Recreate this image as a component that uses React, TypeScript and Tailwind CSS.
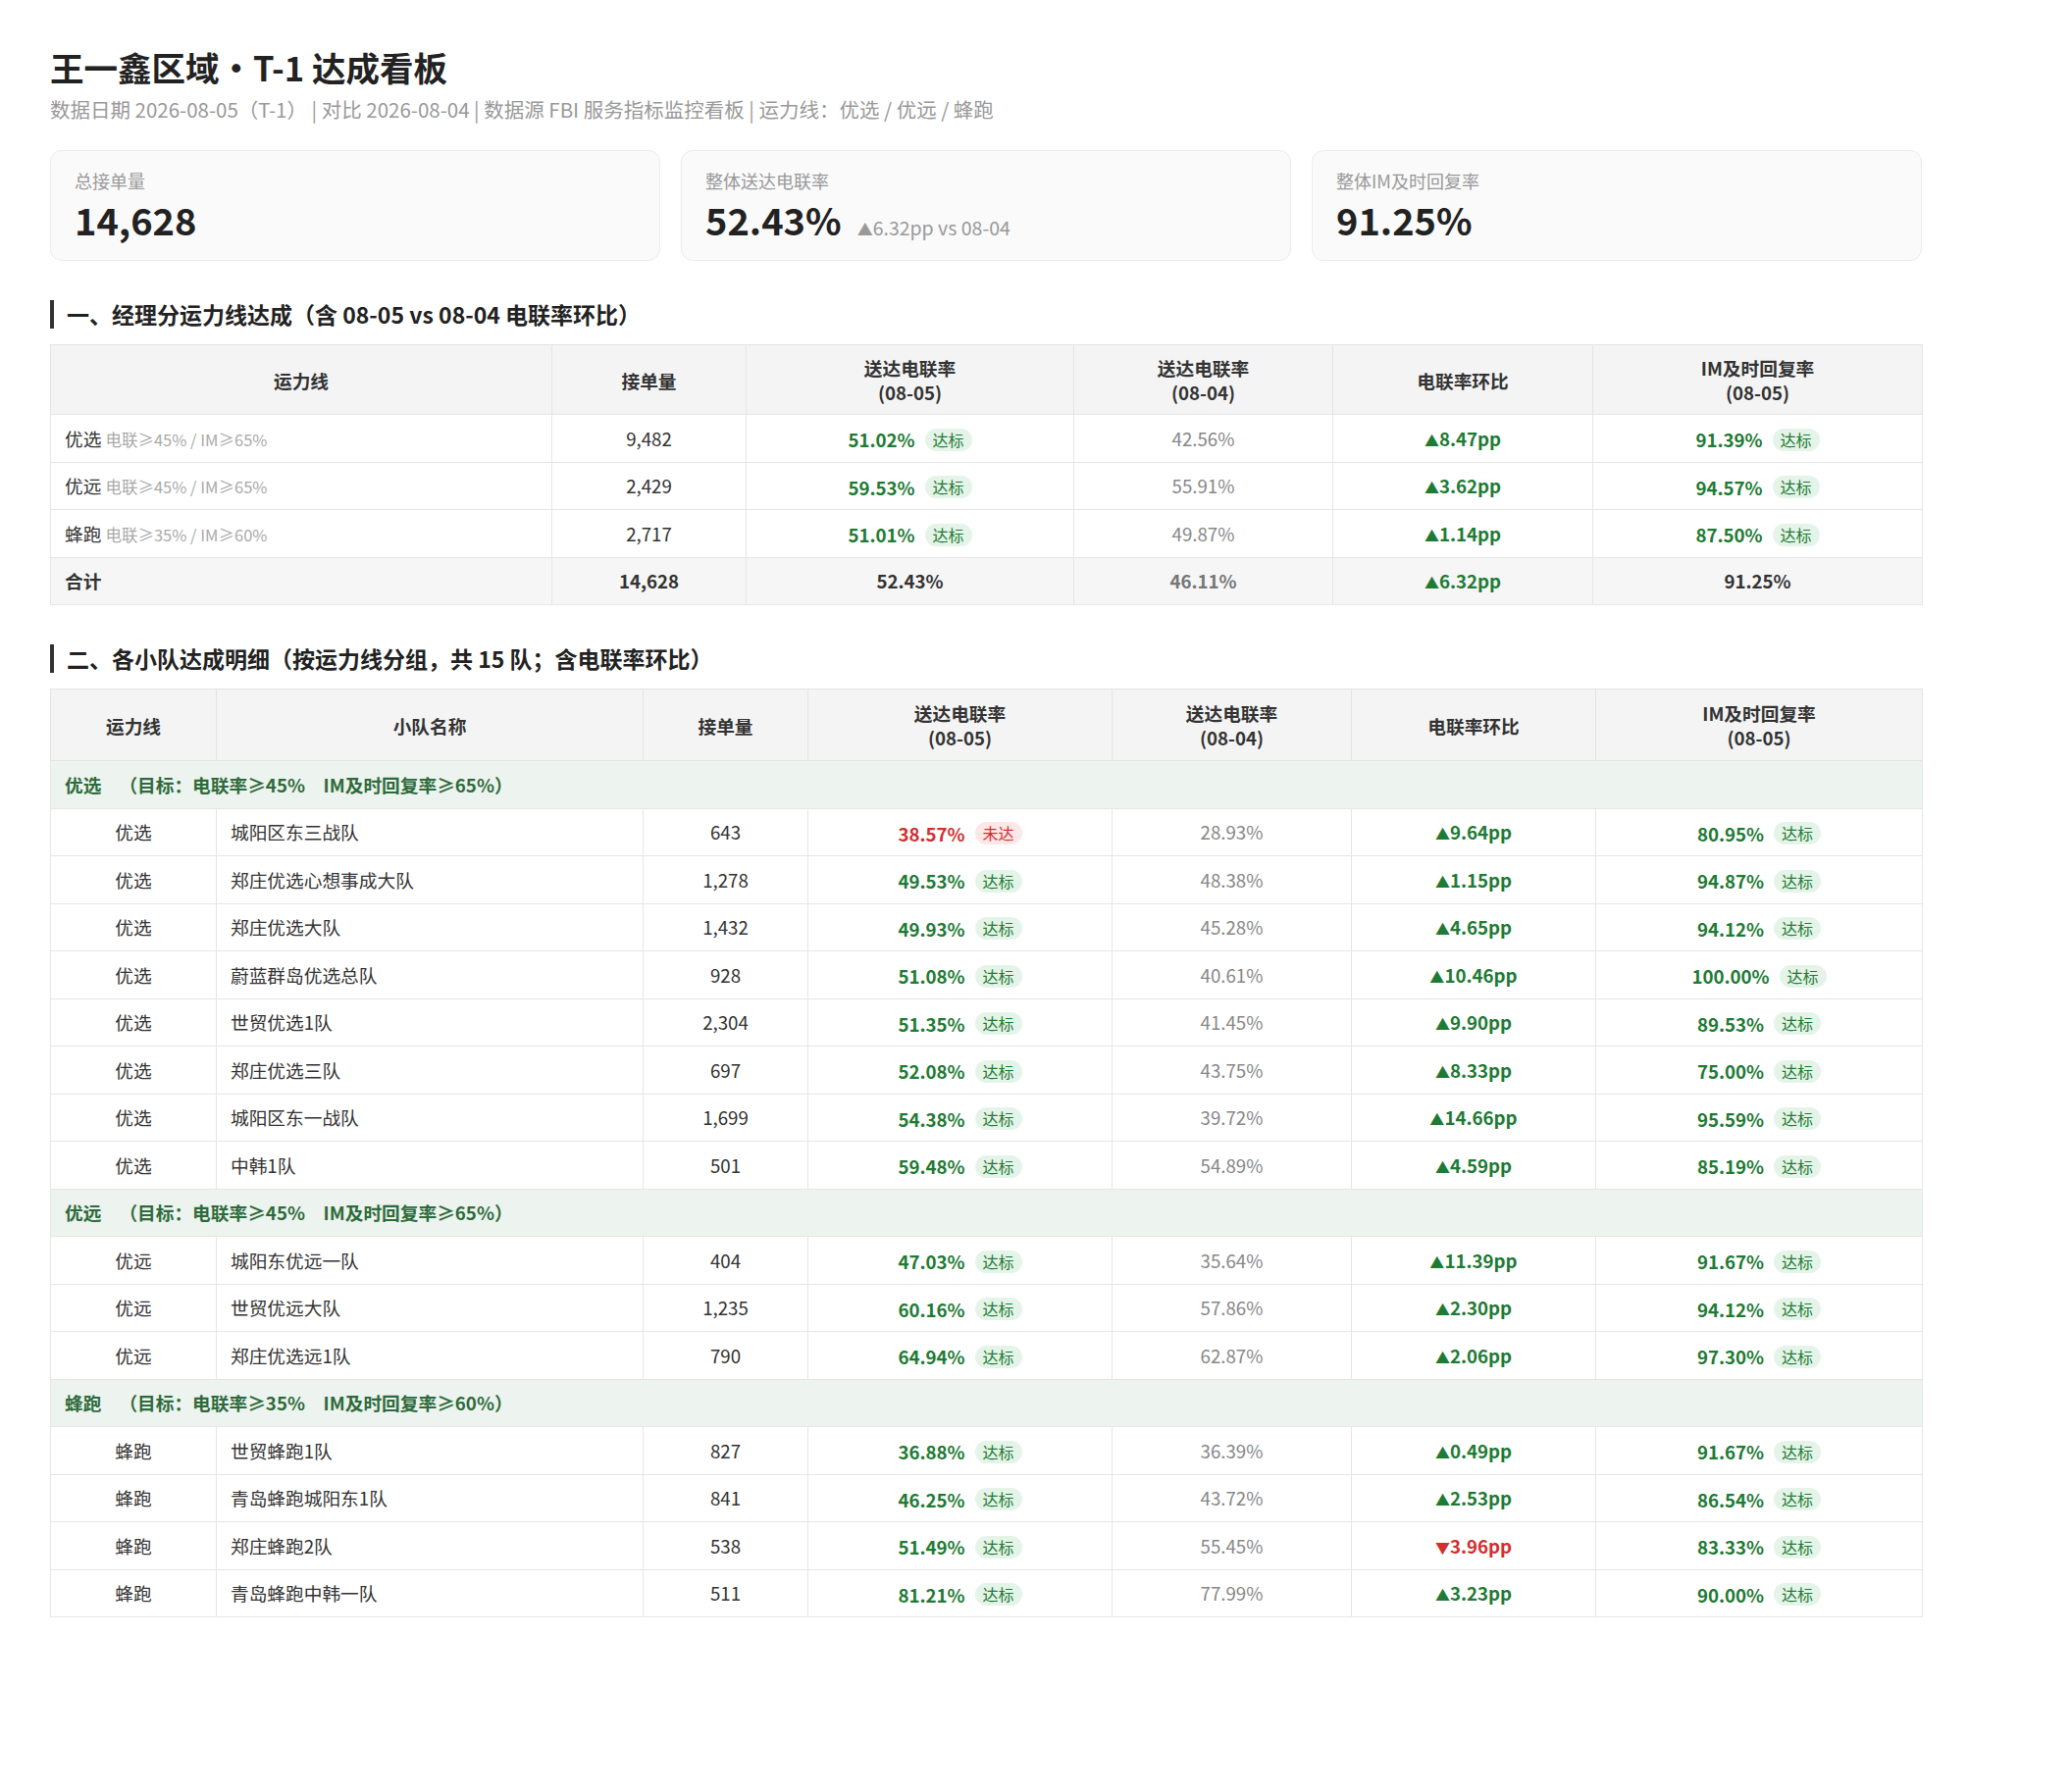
import React from "react";

interface LineRow {
  line: string;
  target: string;
  orders: string;
  rate: string;
  ratePrev: string;
  delta: string;
  im: string;
}

interface TeamRow {
  line: string;
  name: string;
  orders: string;
  rate: string;
  ok: boolean;
  ratePrev: string;
  delta: string;
  up: boolean;
  im: string;
}

interface Group {
  line: string;
  goal: string;
  teams: TeamRow[];
}

const lineRows: LineRow[] = [
  { line: "优选", target: "电联≥45% / IM≥65%", orders: "9,482", rate: "51.02%", ratePrev: "42.56%", delta: "8.47pp", im: "91.39%" },
  { line: "优远", target: "电联≥45% / IM≥65%", orders: "2,429", rate: "59.53%", ratePrev: "55.91%", delta: "3.62pp", im: "94.57%" },
  { line: "蜂跑", target: "电联≥35% / IM≥60%", orders: "2,717", rate: "51.01%", ratePrev: "49.87%", delta: "1.14pp", im: "87.50%" },
];

const t = (
  line: string,
  name: string,
  orders: string,
  rate: string,
  ratePrev: string,
  delta: string,
  im: string,
  ok = true,
  up = true
): TeamRow => ({ line, name, orders, rate, ok, ratePrev, delta, up, im });

const groups: Group[] = [
  {
    line: "优选",
    goal: "（目标：电联率≥45%　IM及时回复率≥65%）",
    teams: [
      t("优选", "城阳区东三战队", "643", "38.57%", "28.93%", "9.64pp", "80.95%", false),
      t("优选", "郑庄优选心想事成大队", "1,278", "49.53%", "48.38%", "1.15pp", "94.87%"),
      t("优选", "郑庄优选大队", "1,432", "49.93%", "45.28%", "4.65pp", "94.12%"),
      t("优选", "蔚蓝群岛优选总队", "928", "51.08%", "40.61%", "10.46pp", "100.00%"),
      t("优选", "世贸优选1队", "2,304", "51.35%", "41.45%", "9.90pp", "89.53%"),
      t("优选", "郑庄优选三队", "697", "52.08%", "43.75%", "8.33pp", "75.00%"),
      t("优选", "城阳区东一战队", "1,699", "54.38%", "39.72%", "14.66pp", "95.59%"),
      t("优选", "中韩1队", "501", "59.48%", "54.89%", "4.59pp", "85.19%"),
    ],
  },
  {
    line: "优远",
    goal: "（目标：电联率≥45%　IM及时回复率≥65%）",
    teams: [
      t("优远", "城阳东优远一队", "404", "47.03%", "35.64%", "11.39pp", "91.67%"),
      t("优远", "世贸优远大队", "1,235", "60.16%", "57.86%", "2.30pp", "94.12%"),
      t("优远", "郑庄优选远1队", "790", "64.94%", "62.87%", "2.06pp", "97.30%"),
    ],
  },
  {
    line: "蜂跑",
    goal: "（目标：电联率≥35%　IM及时回复率≥60%）",
    teams: [
      t("蜂跑", "世贸蜂跑1队", "827", "36.88%", "36.39%", "0.49pp", "91.67%"),
      t("蜂跑", "青岛蜂跑城阳东1队", "841", "46.25%", "43.72%", "2.53pp", "86.54%"),
      t("蜂跑", "郑庄蜂跑2队", "538", "51.49%", "55.45%", "3.96pp", "83.33%", true, false),
      t("蜂跑", "青岛蜂跑中韩一队", "511", "81.21%", "77.99%", "3.23pp", "90.00%"),
    ],
  },
];

function Badge({ ok = true }: { ok?: boolean }) {
  return ok ? (
    <span className="ml-[10px] inline-block rounded-full bg-[#e5f4e9] px-2 align-middle text-[16px] font-normal leading-[23px] text-[#1e7b34]">
      达标
    </span>
  ) : (
    <span className="ml-[10px] inline-block rounded-full bg-[#fde7e7] px-2 align-middle text-[16px] font-normal leading-[23px] text-[#d32f2f]">
      未达
    </span>
  );
}

function Rate({ value, ok = true }: { value: string; ok?: boolean }) {
  return (
    <span className="whitespace-nowrap">
      <span className={`align-middle font-bold ${ok ? "text-[#1e7b34]" : "text-[#d32f2f]"}`}>{value}</span>
      <Badge ok={ok} />
    </span>
  );
}

function Delta({ value, up = true }: { value: string; up?: boolean }) {
  return (
    <span className={`font-bold ${up ? "text-[#1e7b34]" : "text-[#d32f2f]"}`}>
      <span className="text-[15px]">{up ? "▲" : "▼"}</span>
      {value}
    </span>
  );
}

function SectionTitle({ children }: { children: React.ReactNode }) {
  return (
    <h2 className="mb-4 border-l-4 border-[#333] pl-[13px] text-[23px] font-bold leading-[29px] text-[#222]">
      {children}
    </h2>
  );
}

function HeadCell({ children, className = "" }: { children: React.ReactNode; className?: string }) {
  return (
    <th className={`border border-[#e4e4e4] px-3 text-center align-middle font-bold leading-[25px] text-[#333] ${className}`}>
      {children}
    </th>
  );
}

const td = "border border-[#e6e6e6] px-[14px] py-0 align-middle";

export default function App() {
  return (
    <div className="min-h-screen bg-white font-['Noto_Sans_CJK_SC','Noto_Sans',sans-serif] text-[#333]">
      <div className="w-[2010px] px-[51px] pt-[46px] pb-10">
        {/* Header */}
        <h1 className="text-[34.5px] font-bold leading-[44px] text-[#222]">王一鑫区域・T-1 达成看板</h1>
        <p className="mt-[7px] text-[20.5px] leading-[28px] text-[#999]">
          数据日期 2026-08-05（T-1） | 对比 2026-08-04 | 数据源 FBI 服务指标监控看板 | 运力线：优选 / 优远 / 蜂跑
        </p>

        {/* Summary cards */}
        <div className="mt-[28px] grid grid-cols-3 gap-[21px]">
          <div className="rounded-xl border border-[#ececec] bg-[#fafafa] px-6 pt-[18px] pb-[18px]">
            <div className="text-[18px] leading-[24px] text-[#999]">总接单量</div>
            <div className="mt-[5px] text-[38px] font-bold leading-[46px] text-[#222]">14,628</div>
          </div>
          <div className="rounded-xl border border-[#ececec] bg-[#fafafa] px-6 pt-[18px] pb-[18px]">
            <div className="text-[18px] leading-[24px] text-[#999]">整体送达电联率</div>
            <div className="mt-[5px] flex items-baseline">
              <span className="text-[38px] font-bold leading-[46px] text-[#222]">52.43%</span>
              <span className="ml-4 text-[19.5px] text-[#999]">
                <span className="text-[16px]">▲</span>6.32pp vs 08-04
              </span>
            </div>
          </div>
          <div className="rounded-xl border border-[#ececec] bg-[#fafafa] px-6 pt-[18px] pb-[18px]">
            <div className="text-[18px] leading-[24px] text-[#999]">整体IM及时回复率</div>
            <div className="mt-[5px] text-[38px] font-bold leading-[46px] text-[#222]">91.25%</div>
          </div>
        </div>

        {/* Section 1 */}
        <div className="mt-10">
          <SectionTitle>一、经理分运力线达成（含 08-05 vs 08-04 电联率环比）</SectionTitle>
          <table className="w-[1908px] table-fixed border-collapse border border-[#e4e4e4] text-[18.7px]">
            <colgroup>
              <col className="w-[511px]" />
              <col className="w-[198px]" />
              <col className="w-[334px]" />
              <col className="w-[264px]" />
              <col className="w-[265px]" />
              <col className="w-[336px]" />
            </colgroup>
            <thead>
              <tr className="h-[71px] bg-[#f4f4f4]">
                <HeadCell>运力线</HeadCell>
                <HeadCell>接单量</HeadCell>
                <HeadCell>
                  送达电联率
                  <br />
                  (08-05)
                </HeadCell>
                <HeadCell>
                  送达电联率
                  <br />
                  (08-04)
                </HeadCell>
                <HeadCell>电联率环比</HeadCell>
                <HeadCell>
                  IM及时回复率
                  <br />
                  (08-05)
                </HeadCell>
              </tr>
            </thead>
            <tbody>
              {lineRows.map((r) => (
                <tr key={r.line} className="h-[48.5px]">
                  <td className={`${td} text-left`}>
                    {r.line}
                    <span className="ml-1 text-[16.5px] text-[#aaa]">{r.target}</span>
                  </td>
                  <td className={`${td} text-center`}>{r.orders}</td>
                  <td className={`${td} text-center`}>
                    <Rate value={r.rate} />
                  </td>
                  <td className={`${td} text-center text-[#888]`}>{r.ratePrev}</td>
                  <td className={`${td} text-center`}>
                    <Delta value={r.delta} />
                  </td>
                  <td className={`${td} text-center`}>
                    <Rate value={r.im} />
                  </td>
                </tr>
              ))}
              <tr className="h-[48.5px] bg-[#f6f6f6] font-bold">
                <td className={`${td} text-left`}>合计</td>
                <td className={`${td} text-center`}>14,628</td>
                <td className={`${td} text-center`}>52.43%</td>
                <td className={`${td} text-center text-[#777]`}>46.11%</td>
                <td className={`${td} text-center`}>
                  <Delta value="6.32pp" />
                </td>
                <td className={`${td} text-center`}>91.25%</td>
              </tr>
            </tbody>
          </table>
        </div>

        {/* Section 2 */}
        <div className="mt-10">
          <SectionTitle>二、各小队达成明细（按运力线分组，共 15 队；含电联率环比）</SectionTitle>
          <table className="w-[1908px] table-fixed border-collapse border border-[#e4e4e4] text-[18.7px]">
            <colgroup>
              <col className="w-[169px]" />
              <col className="w-[435px]" />
              <col className="w-[168px]" />
              <col className="w-[310px]" />
              <col className="w-[244px]" />
              <col className="w-[249px]" />
              <col className="w-[333px]" />
            </colgroup>
            <thead>
              <tr className="h-[73px] bg-[#f4f4f4]">
                <HeadCell>运力线</HeadCell>
                <HeadCell>小队名称</HeadCell>
                <HeadCell>接单量</HeadCell>
                <HeadCell>
                  送达电联率
                  <br />
                  (08-05)
                </HeadCell>
                <HeadCell>
                  送达电联率
                  <br />
                  (08-04)
                </HeadCell>
                <HeadCell>电联率环比</HeadCell>
                <HeadCell>
                  IM及时回复率
                  <br />
                  (08-05)
                </HeadCell>
              </tr>
            </thead>
            <tbody>
              {groups.map((g) => (
                <React.Fragment key={g.line}>
                  <tr className="h-[48.5px] bg-[#edf3ee]">
                    <td colSpan={7} className={`${td} text-left font-bold text-[#2e6b3c]`}>
                      {g.line}
                      <span className="ml-[18px]">{g.goal}</span>
                    </td>
                  </tr>
                  {g.teams.map((r) => (
                    <tr key={r.name} className="h-[48.5px]">
                      <td className={`${td} text-center`}>{r.line}</td>
                      <td className={`${td} text-left`}>{r.name}</td>
                      <td className={`${td} text-center`}>{r.orders}</td>
                      <td className={`${td} text-center`}>
                        <Rate value={r.rate} ok={r.ok} />
                      </td>
                      <td className={`${td} text-center text-[#888]`}>{r.ratePrev}</td>
                      <td className={`${td} text-center`}>
                        <Delta value={r.delta} up={r.up} />
                      </td>
                      <td className={`${td} text-center`}>
                        <Rate value={r.im} />
                      </td>
                    </tr>
                  ))}
                </React.Fragment>
              ))}
            </tbody>
          </table>
        </div>
      </div>
    </div>
  );
}
